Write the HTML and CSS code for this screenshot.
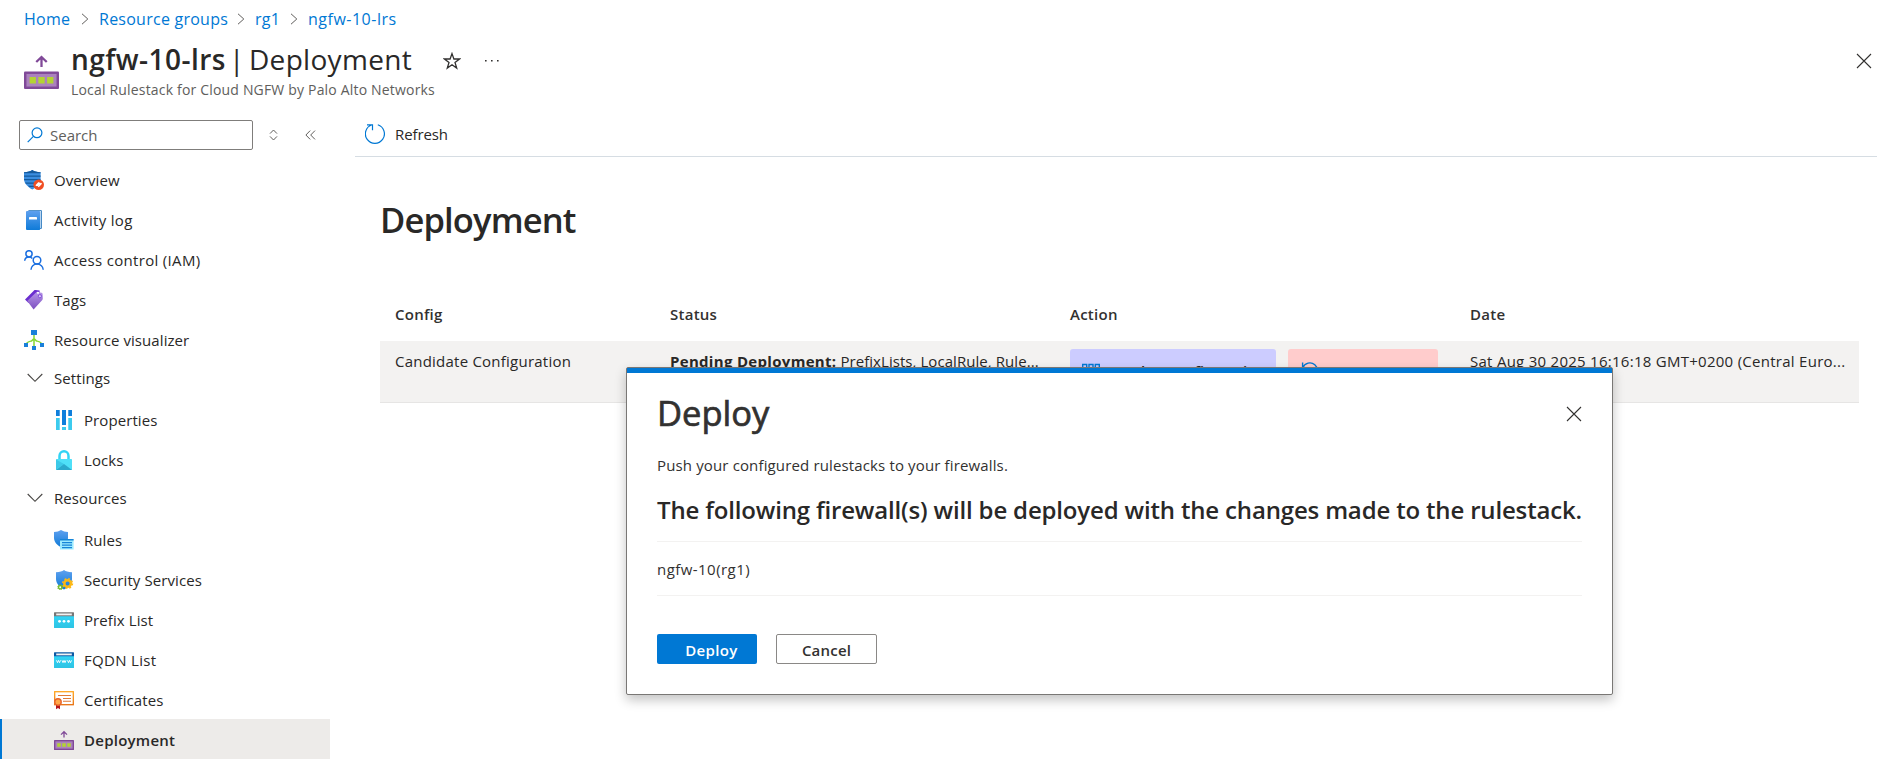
FILE: index.html
```html
<!DOCTYPE html>
<html lang="en">
<head>
<meta charset="utf-8">
<title>ngfw-10-lrs | Deployment</title>
<link rel="stylesheet" href="styles.css">
</head>
<body>
<svg class="defs" width="0" height="0" aria-hidden="true">
  <defs>
    <linearGradient id="blue" x1="0" y1="0" x2="0" y2="1"><stop offset="0" stop-color="#5ea0ef"/><stop offset="1" stop-color="#0f7bd8"/></linearGradient>
    <linearGradient id="cyan" x1="0" y1="0" x2="0" y2="1"><stop offset="0" stop-color="#32d4f5"/><stop offset="1" stop-color="#2dc3e3"/></linearGradient>
    <linearGradient id="purple" x1="0" y1="0" x2="0" y2="1"><stop offset="0" stop-color="#b796e8"/><stop offset="1" stop-color="#7c4fc0"/></linearGradient>
    <linearGradient id="orange" x1="0" y1="0" x2="0" y2="1"><stop offset="0" stop-color="#ffa51f"/><stop offset="1" stop-color="#e8700e"/></linearGradient>
    <symbol id="stack" viewBox="0 0 20 20">
      <path d="M10 7.4V2M7 4.6 10 1.7l3 2.9" fill="none" stroke="#804998" stroke-width="1.3"/>
      <rect x="0" y="10" width="20" height="10" rx=".6" fill="#804998"/>
      <rect x="1.4" y="11.4" width="17.2" height="7.2" fill="#ab82bd"/>
      <path d="M3.2 13.2h3.6v3.6H3.2zM8.2 13.2h3.6v3.6H8.2zM13.2 13.2h3.6v3.6h-3.6z" fill="#b4d333"/>
    </symbol>
  </defs>
</svg>

<nav class="crumbs">
  <a>Home</a>
  <svg class="sep" viewBox="0 0 8 12"><path d="M1 .8 6.8 6 1 11.2"/></svg>
  <a class="c2">Resource groups</a>
  <svg class="sep" viewBox="0 0 8 12"><path d="M1 .8 6.8 6 1 11.2"/></svg>
  <a class="c3">rg1</a>
  <svg class="sep" viewBox="0 0 8 12"><path d="M1 .8 6.8 6 1 11.2"/></svg>
  <a class="c4">ngfw-10-lrs</a>
</nav>

<header class="top">
  <svg class="top-icon" viewBox="0 0 20 20"><use href="#stack"/></svg>
  <div class="titles">
    <div class="title-row">
      <h1 class="title"><b>ngfw-10-lrs</b><span class="bar">|</span><span class="page">Deployment</span></h1>
      <svg class="star" viewBox="0 0 18 18"><path d="M9 1.6 10.9 7h5.6L12 10.5l1.7 5.6L9 12.8l-4.7 3.3L6 10.5 1.5 7h5.6z"/></svg>
      <svg class="dots" viewBox="0 0 14 4"><path d="M0 1h1.6v1.6H0zM6 1h1.6v1.6H6zM12 1h1.6v1.6H12z"/></svg>
    </div>
    <div class="subtitle">Local Rulestack for Cloud NGFW by Palo Alto Networks</div>
  </div>
  <svg class="close" viewBox="0 0 16 16"><path d="M1 1l14 14M15 1 1 15"/></svg>
</header>

<div class="layout">
  <aside class="side">
    <div class="side-tools">
      <div class="search">
        <svg class="lens" viewBox="0 0 16 16"><circle cx="10" cy="5.8" r="4.9"/><path d="M6.4 9.4.7 15.1"/></svg>
        <span>Search</span>
      </div>
      <svg class="updown" viewBox="0 0 9 12"><path d="M1 4.600 4.500 1 8 4.600M1 7.400 4.500 11 8 7.400"/></svg>
      <svg class="collapse" viewBox="0 0 11 10"><path d="M5.2.6.9 5l4.3 4.4M10 .6 5.7 5 10 9.4"/></svg>
    </div>
    <ul class="menu">
      <li><svg class="ic" viewBox="0 0 20 20"><path d="M0 2.2C4 2.2 6 1.4 8.3 0c2.300 1.400 4.300 2.200 8.300 2.200V9c0 5-4.800 8.400-8.300 10.500C4.800 17.400 0 14 0 9z" fill="#3b8ee0"/><path d="M0 2.200C4 2.200 6 1.400 8.300 0c2.300 1.400 4.300 2.200 8.300 2.200v1H0zM0 5.500h16.600v1.300H0zM0 9h16.500v1.300H.1zM1.100 12.500h14.400l-.8 1.300H1.900zM3.800 15.800h9l-1.600 1.300H5.500z" fill="#155a9c"/><circle cx="14.700" cy="14.700" r="5.300" fill="#f04e23"/><path d="M11.900 15.800l3-3.300M14.300 16.900l3.300-3.600M13.300 15.800l3-3" stroke="#fff" stroke-width="1.300" fill="none"/></svg><span>Overview</span></li>
      <li><svg class="ic" viewBox="0 0 20 20"><path d="M4.500 0h12.300a1 1 0 0 1 1 1v17a1 1 0 0 1-1 1H4z" fill="#1b6fb8"/><path d="M4.500.8h12.300v17.400h-1z" fill="#fff"/><rect x="2" y="1" width="14.200" height="19" rx="1" fill="url(#blue)"/><rect x="5" y="7" width="8" height="2.600" rx=".4" fill="#fff"/></svg><span class="wide">Activity log</span></li>
      <li><svg class="ic line" viewBox="0 0 20 20"><circle cx="5" cy="3.800" r="3.100"/><path d="M.7 10.800C.9 8.700 2.600 7 5 7c1.300 0 2.500.5 3.300 1.400"/><circle cx="13" cy="10.200" r="3.800"/><path d="M7 19.800c0-3.200 2.600-5.700 6-5.700s6.200 2.500 6.200 5.700"/></svg><span class="wide">Access control (IAM)</span></li>
      <li><svg class="ic" viewBox="0 0 20 20"><path d="M1 9.500 10 .6c.5-.5 1-.6 1.600-.5l4 .5v3.200L4.500 13z" fill="#6b2fd0"/><path d="M3.200 11 12 2.400c.4-.4 1-.6 1.600-.5l4 .8c.6.1 1 .6 1 1.200l.2 4.700c0 .5-.2 1-.5 1.300L9.600 19.500z" fill="url(#purple)"/><circle cx="14" cy="2.800" r="1.100" fill="#fff"/><circle cx="15.900" cy="6.200" r="1.600" fill="#d9c6f7" stroke="#6b2fd0" stroke-width=".7"/></svg><span>Tags</span></li>
      <li><svg class="ic" viewBox="0 0 20 20"><path d="M10 5v11M2 15c.2-3.300 3-3.500 5.500-4L10 8.500 12.500 11c2.500.5 5.300.7 5.500 4" fill="none" stroke="#86d633" stroke-width="1.500"/><path d="M7 0h6v5H7zM0 13h4v4H0zM8 16h4v4H8zM16 13h4v4h-4z" fill="#1a80d9"/></svg><span>Resource visualizer</span></li>
      <li class="group"><svg class="chev" viewBox="0 0 16 10"><path d="M.7 1 8 8.300 15.300 1"/></svg><span>Settings</span></li>
      <li class="sub"><svg class="ic" viewBox="0 0 20 20"><path d="M2 0h4v6H2zM8 0h4v15H8zM14 0h4v6h-4z" fill="#0f7fdc"/><path d="M2 8h4v12H2zM8 17h4v3H8zM14 8h4v12h-4z" fill="#3ccbee"/><path d="M5.200 0h.8v20h-.8zM14 0h.8v20H14z" fill="#fff" opacity=".35"/></svg><span>Properties</span></li>
      <li class="sub"><svg class="ic" viewBox="0 0 20 20"><path d="M5.500 9.500V6a4.500 4.700 0 0 1 9 0v3.500" fill="none" stroke="#32d4f5" stroke-width="2.500"/><rect x="2" y="9" width="16" height="11" rx=".6" fill="#4fe0f8"/><path d="M2 9.500 10 14l-8 5.500z" fill="#3cc9e8"/><path d="M2 20l8-6 8 6z" fill="#2ba9cc"/></svg><span>Locks</span></li>
      <li class="group"><svg class="chev" viewBox="0 0 16 10"><path d="M.7 1 8 8.300 15.300 1"/></svg><span>Resources</span></li>
      <li class="sub"><svg class="ic" viewBox="0 0 20 20"><path d="M0 2c3 0 5-.7 7-2 2 1.300 4 2 7 2v6c0 4.500-4 7.500-7 9.200C4 15.500 0 12.500 0 8z" fill="url(#blue)"/><rect x="6" y="9" width="13.600" height="10.500" fill="#9cebff"/><path d="M6 9h13.600v1.500H6zM8 12h10v1.300H8zM8 14.500h10v1.300H8zM8 17h10v1.300H8z" fill="#1684d8"/></svg><span>Rules</span></li>
      <li class="sub"><svg class="ic" viewBox="0 0 20 20"><path d="M2 2.200C6 2.200 8 1.400 10 0c2 1.400 4 2.200 8 2.200V9c0 5-4.500 8.500-8 10.500C6.500 17.500 2 14 2 9z" fill="url(#blue)"/><circle cx="13.600" cy="13.500" r="3.300" fill="none" stroke="#fdb813" stroke-width="2.500"/><circle cx="13.600" cy="13.500" r="4.900" fill="none" stroke="#fdb813" stroke-width="1.400" stroke-dasharray="1.930 1.920"/><circle cx="6.200" cy="17.300" r="1.700" fill="#fff" stroke="#76bc2d" stroke-width="1.500"/><circle cx="6.200" cy="17.300" r="2.500" fill="none" stroke="#76bc2d" stroke-width="1" stroke-dasharray="1 .96"/></svg><span>Security Services</span></li>
      <li class="sub"><svg class="ic" viewBox="0 -2 20 20"><path d="M0 4h20v11.400a.6.6 0 0 1-.6.600H.6a.6.6 0 0 1-.6-.6z" fill="url(#cyan)"/><path d="M0 4.300V.8A.6.6 0 0 1 .6.200h18.800a.6.6 0 0 1 .6.600v3.500z" fill="#767676"/><rect x="2.200" y="1.500" width="15.600" height="1.800" fill="#f2f2f2"/><circle cx="5.500" cy="9.300" r="1.400" fill="#fff"/><circle cx="10" cy="9.300" r="1.400" fill="#fff"/><circle cx="14.500" cy="9.300" r="1.400" fill="#fff"/></svg><span>Prefix List</span></li>
      <li class="sub"><svg class="ic" viewBox="0 -2 20 20"><path d="M0 4h20v11.400a.6.6 0 0 1-.6.600H.6a.6.6 0 0 1-.6-.6z" fill="url(#cyan)"/><path d="M0 4.300V.8A.6.6 0 0 1 .6.200h18.800a.6.6 0 0 1 .6.600v3.500z" fill="#0c59a4"/><rect x="2.200" y="1.500" width="15.600" height="1.800" fill="#f2f2f2"/><path d="M2.500 8.300l1 2.400 1-2.400 1 2.400 1-2.400M8 8.300l1 2.400 1-2.400 1 2.400 1-2.400M13.500 8.300l1 2.400 1-2.400 1 2.400 1-2.400" fill="none" stroke="#fff" stroke-width=".9"/></svg><span class="wide">FQDN List</span></li>
      <li class="sub"><svg class="ic" viewBox="0 0 20 20"><rect x=".7" y="1.700" width="18.600" height="13" fill="#fff" stroke="url(#orange)" stroke-width="1.300"/><path d="M4 5.500h13M9 8.500h8M9 11.200h8" stroke="#e07a35" stroke-width="1.100"/><path d="M2 14h4v5.300l-2-1.300-2 1.300z" fill="#b3161d"/><circle cx="4" cy="12" r="3.200" fill="#ffa94a" stroke="#e8632a" stroke-width="1.400"/></svg><span>Certificates</span></li>
      <li class="sub active"><svg class="ic" viewBox="0 0 20 20"><use href="#stack"/></svg><span>Deployment</span></li>
    </ul>
  </aside>

  <main class="main">
    <div class="toolbar">
      <svg class="refresh" viewBox="0 0 20 20"><path d="M7 .8A9.500 9.500 0 1 0 12.800.8M2 .8h5.500v5.500"/></svg>
      <span>Refresh</span>
    </div>
    <h2 class="heading">Deployment</h2>
    <div class="table">
      <div class="row head"><span>Config</span><span>Status</span><span>Action</span><span>Date</span></div>
      <div class="row body">
        <span class="cfg">Candidate Configuration</span>
        <span class="status"><b>Pending Deployment:</b> PrefixLists, LocalRule, Rule...</span>
        <span class="actions">
          <span class="btn-deploy"><svg viewBox="0 0 18 18"><path d="M.7 2.500h4v4h-4zM7 2.500h4v4H7zM13.300 2.500h4v4h-4zM.7 9h4v4h-4zM7 9h4v4H7zM13.300 9h4v4h-4z"/></svg>Deploy Configuration</span>
          <span class="btn-revert"><svg viewBox="0 0 18 18"><path d="M1.600.5v6H7M1.800 5.700A7.600 7.600 0 1 1 1.400 10"/></svg></span>
        </span>
        <span class="date">Sat Aug 30 2025 16:16:18 GMT+0200 (Central Euro...</span>
      </div>
    </div>
  </main>
</div>

<section class="dialog" role="dialog">
  <div class="dlg-head">
    <h2 class="dlg-title">Deploy</h2>
    <svg class="close" viewBox="0 0 16 16"><path d="M1 1l14 14M15 1 1 15"/></svg>
  </div>
  <p class="dlg-text">Push your configured rulestacks to your firewalls.</p>
  <h3 class="dlg-sub">The following firewall(s) will be deployed with the changes made to the rulestack.</h3>
  <div class="fw">ngfw-10(rg1)</div>
  <div class="dlg-foot">
    <button class="primary">Deploy</button>
    <button class="secondary">Cancel</button>
  </div>
</section>
</body>
</html>
```
FILE: styles.css
```css
* { box-sizing: border-box; }
body {
  margin: 0;
  height: 761px;
  overflow: hidden;
  position: relative;
  background: #fff;
  color: #292827;
  font: 15px/20px "Open Sans", "Noto Sans", sans-serif;
  white-space: nowrap;
}
h1, h2, h3, p, ul { margin: 0; padding: 0; }
svg { display: block; flex: none; }
.defs { position: absolute; }

.crumbs {
  display: flex;
  align-items: center;
  height: 38px;
  padding: 0 0 1px 24px;
  color: #0078d4;
  font-size: 16px;
  letter-spacing: .25px;
}
.crumbs a { width: 47px; }
.crumbs .c2 { width: 128px; }
.crumbs .c3 { width: 25px; }
.crumbs .c4 { width: 90px; letter-spacing: .5px; }
.sep { width: 8px; height: 12px; margin: 0 10px; fill: none; stroke: #605e5c; stroke-width: 1; }

.top { display: flex; height: 82px; padding-left: 24px; }
.top-icon { width: 35px; height: 35px; margin: 16px 12px 0 0; }
.title-row { display: flex; height: 42px; align-items: center; }
.title { display: flex; font-size: 28px; font-weight: 400; line-height: 42px; }
.title b { width: 158px; font-weight: 600; letter-spacing: .45px; }
.title .bar { width: 20px; }
.title .page { width: 163px; letter-spacing: .3px; }
.star { width: 18px; height: 18px; margin: 4px 0 0 31px; fill: none; stroke: #323130; stroke-width: 1.3; }
.dots { width: 14px; height: 4px; margin: 3px 0 0 24px; fill: #323130; }
.subtitle { font-size: 14px; line-height: 20px; letter-spacing: .18px; color: #605e5c; }
.close { width: 16px; height: 16px; fill: none; stroke: #323130; stroke-width: 1.1; }
.top .close { margin: 15px 5px 0 auto; }

.layout { display: flex; }
.side { width: 355px; flex: none; }
.side-tools { display: flex; align-items: center; height: 30px; padding-left: 19px; }
.search {
  display: flex;
  align-items: center;
  width: 234px;
  height: 30px;
  padding-left: 7px;
  border: 1px solid #7f7d7b;
  border-radius: 2px;
  color: #605e5c;
}
.lens { width: 16px; height: 16px; margin-right: 7px; fill: none; stroke: #0078d4; stroke-width: 1.2; }
.updown { width: 9px; height: 12px; margin-left: 16px; fill: none; stroke: #605e5c; }
.collapse { width: 11px; height: 10px; margin-left: 27px; fill: none; stroke: #605e5c; }
.menu { margin-top: 9px; list-style: none; letter-spacing: .08px; }
.menu li {
  display: flex;
  align-items: center;
  width: 330px;
  height: 40px;
  padding: 2px 0 0 24px;
}
.menu .wide { letter-spacing: .32px; }
.ic { width: 20px; height: 20px; margin-right: 10px; }
.line { fill: none; stroke: #1b6fe0; stroke-width: 1.5; }
.chev { width: 16px; height: 10px; margin: 0 11px 0 3px; fill: none; stroke: #484644; stroke-width: 1.1; }
.menu .group { padding: 0 0 3px 24px; }
.menu .sub { padding-left: 54px; }
.menu .active { padding-left: 52px; border-left: 2px solid #0078d4; background: #edebe9; font-weight: 600; letter-spacing: .25px; }

.main { flex: 1; min-width: 0; }
.toolbar { display: flex; align-items: center; height: 37px; padding: 0 0 8px 10px; border-bottom: 1px solid #d6dde3; letter-spacing: -.1px; }
.refresh { width: 20px; height: 20px; margin-right: 10px; fill: none; stroke: #0078d4; stroke-width: 1.2; }
.heading { margin: 38px 0 0 25px; font-size: 34.500px; line-height: 50px; font-weight: 600; letter-spacing: -.85px; }
.table { margin: 38px 18px 0 25px; }
.row { display: grid; grid-template-columns: 275px 400px 400px 1fr; padding-left: 15px; letter-spacing: .27px; }
.head { height: 58px; padding-top: 21px; font-weight: 600; color: #323130; letter-spacing: .25px; }
.body { height: 62px; padding-top: 8px; background: #f3f2f1; border-bottom: 1px solid #e6e5e4; }
.cfg, .status, .date { padding-top: 2px; }
.cfg { letter-spacing: .23px; }
.status { letter-spacing: .06px; }
.status b { font-weight: 700; letter-spacing: .31px; }
.actions { display: flex; gap: 12px; }
.btn-deploy, .btn-revert { display: flex; height: 45px; padding-top: 13px; border-radius: 3px; font-weight: 600; line-height: 18px; letter-spacing: 0; }
.btn-deploy { width: 206px; background: #ccccff; padding-left: 12px; }
.btn-revert { width: 150px; background: #ffcccc; padding-left: 13px; }
.actions svg { width: 18px; height: 18px; margin-right: 12px; fill: none; stroke: #0078d4; stroke-width: 1.4; }

.dialog {
  position: absolute;
  left: 626px;
  top: 367px;
  width: 987px;
  height: 328px;
  padding: 0 30px;
  background: #fff;
  border: 1px solid #797775;
  border-radius: 2px;
  box-shadow: 0 5px 12px rgba(0, 0, 0, .24);
  color: #323130;
}
.dialog::before { content: ""; display: block; height: 5px; margin: 0 -30px; background: #0078d4; }
.dlg-head { display: flex; justify-content: space-between; align-items: center; height: 80px; padding-top: 2px; }
.dlg-title { font-size: 34.500px; line-height: 44px; margin-bottom: 2px; font-weight: 400; -webkit-text-stroke: .7px #323130; }
.dlg-text { margin-top: 2px; letter-spacing: .14px; }
.dlg-sub { margin-top: 18px; padding-bottom: 14px; border-bottom: 1px solid #f3f2f1; font-size: 24px; line-height: 34px; font-weight: 600; letter-spacing: -.165px; color: #292827; }
.fw { height: 54px; padding-top: 17px; border-bottom: 1px solid #f3f2f1; letter-spacing: .45px; }
.dlg-foot { display: flex; gap: 19px; margin-top: 38px; }
.dlg-foot button { height: 30px; padding: 2px 0 0; border-radius: 2px; font: 600 15px/20px "Open Sans", sans-serif; }
.dlg-foot .primary { width: 100px; padding-left: 9px; border: 0; background: #0078d4; color: #fff; letter-spacing: .35px; }
.dlg-foot .secondary { width: 101px; border: 1px solid #8a8886; background: #fff; color: #323130; letter-spacing: .2px; }
```
